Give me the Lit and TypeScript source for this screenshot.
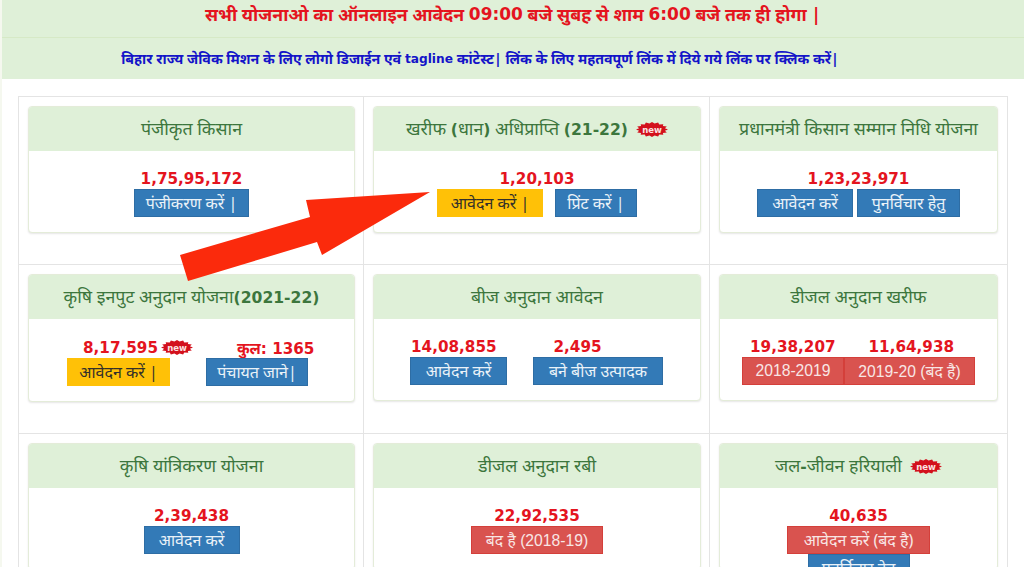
import { LitElement, html, css, svg } from "lit";
import { customElement } from "lit/decorators.js";

type Num = { t: string; badge?: boolean; gap?: number };
type Btn = { t: string; c: "b" | "y" | "r"; w: number; gap?: number; latin?: boolean };
type Cell = { h: string; badge?: boolean; nums: Num[]; btns: Btn[]; nx?: number; bx?: number; tall?: boolean; extra?: Btn };

const cells: Cell[] = [
  { h: "पंजीकृत किसान", nums: [{ t: "1,75,95,172" }], btns: [{ t: "पंजीकरण करें |", c: "b", w: 115 }] },
  { h: "खरीफ (धान) अधिप्राप्ति (21-22)", badge: true, nums: [{ t: "1,20,103" }], btns: [{ t: "आवेदन करें |", c: "y", w: 106 }, { t: "प्रिंट करें |", c: "b", w: 82, gap: 12 }] },
  { h: "प्रधानमंत्री किसान सम्मान निधि योजना", nums: [{ t: "1,23,23,971" }], btns: [{ t: "आवेदन करें", c: "b", w: 96 }, { t: "पुनर्विचार हेतु", c: "b", w: 103, gap: 4 }] },
  { h: "कृषि इनपुट अनुदान योजना(2021-22)", tall: true, nx: 54, bx: 38, nums: [{ t: "8,17,595", badge: true }, { t: "कुल: 1365", gap: 44 }], btns: [{ t: "आवेदन करें |", c: "y", w: 103 }, { t: "पंचायत जाने|", c: "b", w: 102, gap: 36 }] },
  { h: "बीज अनुदान आवेदन", nx: 37, bx: 36, nums: [{ t: "14,08,855" }, { t: "2,495", gap: 57 }], btns: [{ t: "आवेदन करें", c: "b", w: 97 }, { t: "बने बीज उत्पादक", c: "b", w: 130, gap: 26 }] },
  { h: "डीजल अनुदान खरीफ", nx: 30, bx: 22, nums: [{ t: "19,38,207" }, { t: "11,64,938", gap: 33 }], btns: [{ t: "2018-2019", c: "r", w: 102, latin: true }, { t: "2019-20 (बंद है)", c: "r", w: 131, latin: true }] },
  { h: "कृषि यांत्रिकरण योजना", nums: [{ t: "2,39,438" }], btns: [{ t: "आवेदन करें", c: "b", w: 96 }] },
  { h: "डीजल अनुदान रबी", nums: [{ t: "22,92,535" }], btns: [{ t: "बंद है (2018-19)", c: "r", w: 132, latin: true }] },
  { h: "जल-जीवन हरियाली", badge: true, nums: [{ t: "40,635" }], btns: [{ t: "आवेदन करें (बंद है)", c: "r", w: 143 }], extra: { t: "पुनर्विचार हेतु", c: "b", w: 102 } },
];

function burst(): string {
  const n = 16, cx = 16, cy = 7.5, pts: string[] = [];
  for (let i = 0; i < n * 2; i++) {
    const a = (Math.PI * i) / n;
    const k = i % 2 ? 0.82 : 1;
    pts.push(`${(cx + Math.cos(a) * 16 * k).toFixed(1)},${(cy + Math.sin(a) * 7.5 * k).toFixed(1)}`);
  }
  return pts.join(" ");
}

/* Digits, brackets and Latin words are set in a wider face than the Devanagari around them. */
function mixed(text: string) {
  return text.split(/([()\-:0-9]+|[a-z]+)/).map((part, i) => (i % 2 ? html`<span class="lat">${part}</span>` : part));
}

@customElement("app-root")
export class AppRoot extends LitElement {
  static styles = css`
    :host { display: block; position: relative; width: 1024px; height: 567px; overflow: hidden; background: #fff; font-family: "Noto Sans", "Noto Sans Devanagari", "Liberation Sans", sans-serif; }
    .wrap { padding-left: 0; border-left: 2px solid #f5f8ef; height: 567px; box-sizing: border-box; }
    .b1 { height: 28px; padding-bottom: 9px; background: #dff0d8; color: #e4141e; font-size: 17.75px; font-weight: 700; display: flex; align-items: center; justify-content: center; white-space: pre; border-bottom: 1px solid #d6e9c6; }
    .b1 .lat { font: 700 17px "DejaVu Sans", sans-serif; }
    .b2 { height: 41px; padding-right: 66px; background: #dff0d8; color: #1414c8; font-size: 14.2px; font-weight: 700; display: flex; align-items: center; justify-content: center; white-space: pre; }
    .b2 .lat { font: 700 12.2px "DejaVu Sans", sans-serif; }
    .grid { display: grid; grid-template-columns: 345px 346px 297px; width: 990px; margin: 17px 0 0 16px; border: 1px solid #e4e4e4; border-bottom: 0; box-sizing: border-box; }
    .cell { padding: 9px 8px 31px 9px; border-bottom: 1px solid #e4e4e4; border-right: 1px solid #e4e4e4; min-width: 0; }
    .cell:nth-child(3n) { border-right: 0; padding-right: 9px; }
    .panel { border: 1px solid #e4ecd9; border-radius: 4px; box-shadow: 0 1px 2px rgba(0,0,0,.1); background: #fff; height: 127px; box-sizing: border-box; }
    .tall .panel { height: 128px; }
    .head { height: 41px; padding-bottom: 3px; background: #dff0d8; color: #3c763d; font-size: 17.8px; display: flex; align-items: center; justify-content: center; gap: 8px; border-radius: 3px 3px 0 0; white-space: pre; }
    .head .lat { font: 700 15.6px "DejaVu Sans", sans-serif; }
    .head .bd { margin-top: 4px; }
    .body { padding-top: 18px; }
    .nums, .btns { display: flex; justify-content: center; align-items: center; }
    .nums.off, .btns.off { justify-content: flex-start; }
    .nums { height: 20px; color: #e4141e; font: 700 15.2px "DejaVu Sans", "Noto Sans", sans-serif; }
    .tall .nums { height: 21px; }
    .num { display: flex; align-items: center; gap: 3px; white-space: nowrap; }
    .btn { height: 28px; display: flex; align-items: center; justify-content: center; color: #fff; font-size: 16px; white-space: nowrap; box-sizing: border-box; flex: none; }
    .b { background: #337ab7; border: 1px solid #2e6da4; color: #eaf2f8; }
    .y { background: #ffc107; color: #33302a; }
    .r { background: #d9534f; border: 1px solid #d43f3a; color: #f8e6e5; }
    .latin { font-family: "Liberation Sans", "Noto Sans", sans-serif; font-size: 15.7px; }
    .extra { margin: 0 auto; }
    .arrow { position: absolute; left: 0; top: 0; pointer-events: none; }
    .bd { flex: none; display: block; }
    .bd text { font: 700 8.5px "DejaVu Sans", sans-serif; fill: #fbe3e3; text-anchor: middle; }
  `;

  badge() {
    return html`<svg class="bd" width="32" height="15" viewBox="0 0 32 15">
      ${svg`<polygon points=${burst()} fill="#d3101c"></polygon><text x="16" y="10.5">new</text>`}
    </svg>`;
  }

  render() {
    return html`<div class="wrap">
        <div class="b1">${mixed("सभी योजनाओ का ऑनलाइन आवेदन 09:00 बजे सुबह से शाम 6:00 बजे तक ही होगा |")}</div>
        <div class="b2">${mixed("बिहार राज्य जेविक मिशन के लिए लोगो डिजाईन एवं tagline कांटेस्ट| लिंक के लिए महतवपूर्ण लिंक में दिये गये लिंक पर क्लिक करें|")}</div>
        <div class="grid">
          ${cells.map(
            (c) => html`<div class="cell ${c.tall ? "tall" : ""}">
              <div class="panel">
                <div class="head"><span>${mixed(c.h)}</span>${c.badge ? this.badge() : ""}</div>
                <div class="body">
                  <div class="nums ${c.nx != null ? "off" : ""}" style=${c.nx != null ? `padding-left:${c.nx}px` : ""}>
                    ${c.nums.map(
                      (n) => html`<div class="num" style=${n.gap ? `margin-left:${n.gap}px` : ""}><span>${n.t}</span>${n.badge ? this.badge() : ""}</div>`
                    )}
                  </div>
                  <div class="btns ${c.bx != null ? "off" : ""}" style=${c.bx != null ? `padding-left:${c.bx}px` : ""}>
                    ${c.btns.map(
                      (b) => html`<div class="btn ${b.c} ${b.latin ? "latin" : ""}" style="width:${b.w}px;${b.gap ? `margin-left:${b.gap}px` : ""}">${b.t}</div>`
                    )}
                  </div>
                  ${c.extra ? html`<div class="btn extra ${c.extra.c}" style="width:${c.extra.w}px">${c.extra.t}</div>` : ""}
                </div>
              </div>
            </div>`
          )}
        </div>
      </div>
      <svg class="arrow" width="1024" height="567" viewBox="0 0 1024 567">
        <polygon points="430,192 306,200 310,217 180,255 188,281 317,242 322,255" fill="#fb2a0c"></polygon>
      </svg>`;
  }
}
